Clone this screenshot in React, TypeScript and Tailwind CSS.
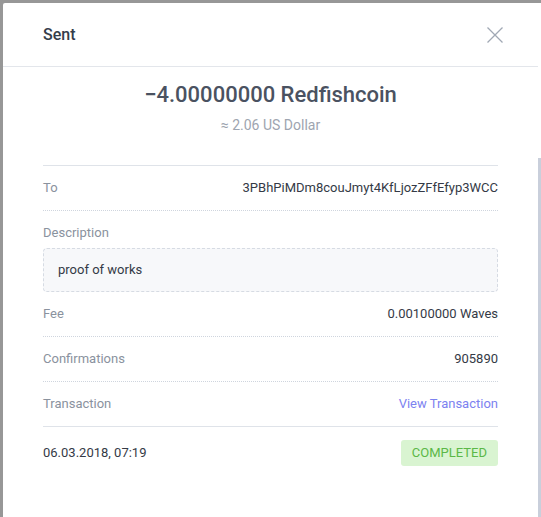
export default function App() {
  const rows = [
    { label: 'Fee', value: '0.00100000 Waves' },
    { label: 'Confirmations', value: '905890' },
  ]

  return (
    <div className="h-screen overflow-hidden bg-[#979797] pt-[3px] pl-[3px] font-['Roboto',sans-serif]">
      <div className="flex h-full bg-white rounded-tl-[2px]">
        {/* Modal */}
        <div className="w-[535px] flex flex-col">
          {/* Header */}
          <div className="h-[64px] border-b border-[#e3e6eb] flex items-center justify-between pl-[40px] pr-[35px]">
            <span className="text-[16px] font-medium text-[#353d4a]">Sent</span>
            <svg width="16" height="16" viewBox="0 0 16 16" className="mt-[1px]">
              <path d="M0.5 0.5 L15.5 15.5 M15.5 0.5 L0.5 15.5" stroke="#a0a8b4" strokeWidth="1.3" fill="none" />
            </svg>
          </div>

          {/* Body */}
          <div className="px-[40px]">
            <div className="pt-[14px] text-center">
              <div className="text-[22px] leading-[28px] font-medium text-[#4a5261]">
                −4.00000000 Redfishcoin
              </div>
              <div className="mt-[6px] text-[14px] leading-[20px] text-[#9ea5b0]">≈ 2.06 US Dollar</div>
            </div>

            <div className="mt-[30px] border-t border-[#dfe3e9]">
              <div className="h-[45px] flex items-center justify-between border-b border-dotted border-[#cfd5de] text-[13px]">
                <span className="text-[#8a929e]">To</span>
                <span className="text-[#343a46]">3PBhPiMDm8couJmyt4KfLjozZFfEfyp3WCC</span>
              </div>

              <div className="pt-[13px] text-[13px]">
                <div className="leading-[17px] text-[#8a929e]">Description</div>
                <div className="mt-[7px] h-[44px] flex items-center pl-[14px] bg-[#f7f8fa] border border-dashed border-[#d6dbe3] rounded-[4px] text-[#343a46]">
                  proof of works
                </div>
              </div>

              {rows.map((r) => (
                <div
                  key={r.label}
                  className="h-[45px] flex items-center justify-between border-b border-dotted border-[#cfd5de] text-[13px]"
                >
                  <span className="text-[#8a929e]">{r.label}</span>
                  <span className="text-[#343a46]">{r.value}</span>
                </div>
              ))}

              <div className="h-[45px] flex items-center justify-between border-b border-[#dfe3e9] text-[13px]">
                <span className="text-[#8a929e]">Transaction</span>
                <span className="text-[#7c82f0]">View Transaction</span>
              </div>

              <div className="h-[52px] flex items-center justify-between text-[13px]">
                <span className="text-[#343a46]">06.03.2018, 07:19</span>
                <span className="h-[26px] px-[11px] flex items-center rounded-[3px] bg-[#d9f4d1] text-[#5bb847]">
                  COMPLETED
                </span>
              </div>
            </div>
          </div>
        </div>

        {/* Scrollbar */}
        <div className="flex-1 flex flex-col">
          <div className="h-[155px]" />
          <div className="flex-1 bg-[#c9cfdb]" />
        </div>
      </div>
    </div>
  )
}
